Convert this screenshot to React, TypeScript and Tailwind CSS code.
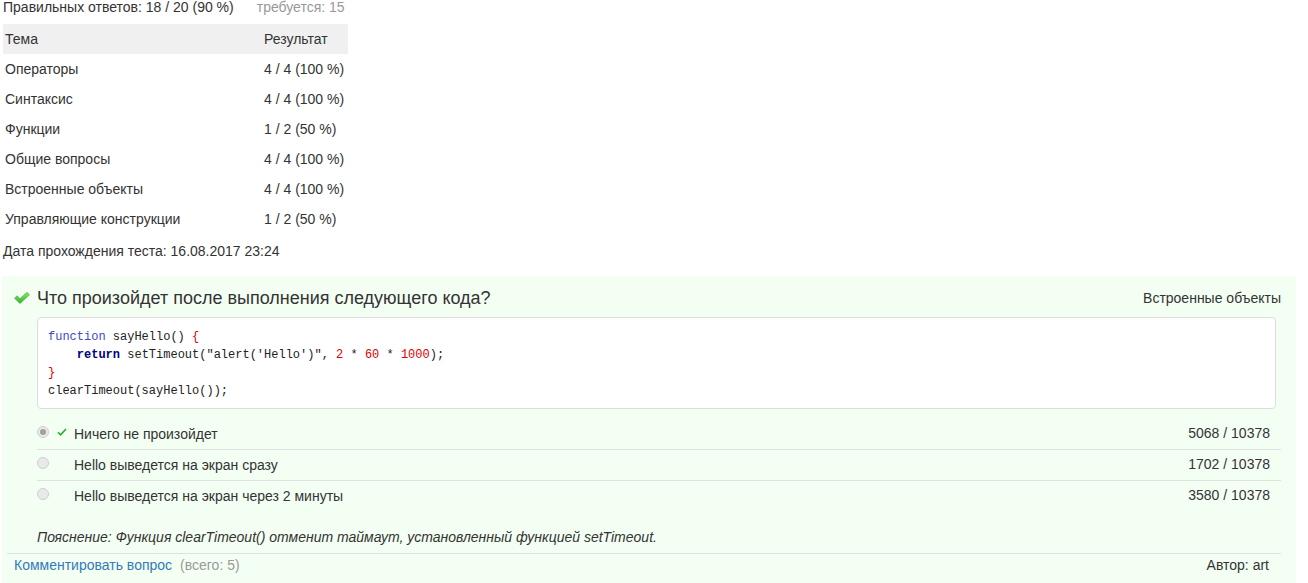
const topics = [
  { name: 'Операторы', result: '4 / 4 (100 %)' },
  { name: 'Синтаксис', result: '4 / 4 (100 %)' },
  { name: 'Функции', result: '1 / 2 (50 %)' },
  { name: 'Общие вопросы', result: '4 / 4 (100 %)' },
  { name: 'Встроенные объекты', result: '4 / 4 (100 %)' },
  { name: 'Управляющие конструкции', result: '1 / 2 (50 %)' },
];

const answers = [
  { text: 'Ничего не произойдет', count: '5068 / 10378', checked: true },
  { text: 'Hello выведется на экран сразу', count: '1702 / 10378', checked: false },
  { text: 'Hello выведется на экран через 2 минуты', count: '3580 / 10378', checked: false },
];

const BigCheck = () => (
  <svg width="16" height="12" viewBox="0 0 16 12" className="shrink-0">
    <defs>
      <linearGradient id="chk" x1="0" y1="0" x2="0" y2="1">
        <stop offset="0" stopColor="#8ee66a" />
        <stop offset="1" stopColor="#2fb52a" />
      </linearGradient>
    </defs>
    <path d="M0.5 6.2 L3 3.8 L6 6.6 L13 0.3 L15.5 2.7 L6 11.5 Z" fill="url(#chk)" stroke="#3aa832" strokeWidth="0.6" strokeLinejoin="round" />
  </svg>
);

const SmallCheck = () => (
  <svg width="10" height="8" viewBox="0 0 10 8" className="shrink-0">
    <path d="M1 4.2 L3.6 6.8 L9 1" fill="none" stroke="#22b022" strokeWidth="1.6" />
  </svg>
);

const Radio = ({ checked }: { checked: boolean }) => (
  <div className="w-[12px] h-[12px] rounded-full border border-[#cfcfcf] bg-[#e9e9e9] flex items-center justify-center shrink-0">
    {checked && <div className="w-[6px] h-[6px] rounded-full bg-[#a0a0a0]" />}
  </div>
);

const App = () => {
  return (
    <div className="min-h-screen bg-white text-[#333] text-[14px]" style={{ fontFamily: '"Liberation Sans", Arial, sans-serif' }}>
      <div className="pl-[3px] leading-[14px] flex">
        <span>Правильных ответов: 18 / 20 (90 %)</span>
        <span className="ml-[23px] text-[#999]">требуется: 15</span>
      </div>

      <table className="ml-[3px] mt-[10px] w-[345px] border-collapse leading-[20px]">
        <thead>
          <tr className="bg-[#f0f0f0]">
            <th className="text-left font-normal py-[5px] pl-[2px] w-[255px]">Тема</th>
            <th className="text-left font-normal py-[5px] pl-[6px]">Результат</th>
          </tr>
        </thead>
        <tbody>
          {topics.map((t) => (
            <tr key={t.name}>
              <td className="py-[5px] pl-[2px]">{t.name}</td>
              <td className="py-[5px] pl-[6px]">{t.result}</td>
            </tr>
          ))}
        </tbody>
      </table>

      <div className="pl-[3px] mt-[7px] leading-[20px]">Дата прохождения теста: 16.08.2017 23:24</div>

      <div className="mt-[15px] ml-[2px] mr-[12px] bg-[#f4fff4] pl-[5px] pr-[15px] pt-[12px] pb-[10px]">
        <div className="flex items-center justify-between pl-[7px]">
          <div className="flex items-center gap-[7px]">
            <BigCheck />
            <span className="text-[18px] leading-[20px]">Что произойдет после выполнения следующего кода?</span>
          </div>
          <span className="leading-[20px]">Встроенные объекты</span>
        </div>

        <div
          className="ml-[30px] mr-[5px] mt-[9px] bg-white border border-[#dddddd] rounded-[4px] px-[10px] pt-[10px] pb-[8px] text-[12px] leading-[18px] text-[#222] whitespace-pre"
          style={{ fontFamily: '"Liberation Mono", "DejaVu Sans Mono", monospace' }}
        >
          <div>
            <span className="text-[#3d49cc]">function</span> sayHello() <span className="text-[#e00000]">{'{'}</span>
          </div>
          <div>
            {'    '}
            <span className="font-bold text-[#000080]">return</span> setTimeout("alert('Hello')", <span className="text-[#e00000]">2</span> * <span className="text-[#e00000]">60</span> * <span className="text-[#e00000]">1000</span>);
          </div>
          <div className="text-[#e00000]">{'}'}</div>
          <div>clearTimeout(sayHello());</div>
        </div>

        <div className="ml-[30px] mt-[10px]">
          {answers.map((a, i) => (
            <div
              key={a.text}
              className={`flex items-center leading-[20px] ${i < answers.length - 1 ? 'h-[31px] border-b border-[#e0e0e0]' : 'h-[30px]'}`}
            >
              <div className="w-[37px] flex items-center gap-[8px] -mt-[4px]">
                <Radio checked={a.checked} />
                {a.checked && <SmallCheck />}
              </div>
              <span className="flex-1">{a.text}</span>
              <span className="pr-[11px] -mt-[3px]">{a.count}</span>
            </div>
          ))}
        </div>

        <div className="ml-[30px] mt-[16px] italic leading-[20px]">
          Пояснение: Функция clearTimeout() отменит таймаут, установленный функцией setTimeout.
        </div>

        <div className="mt-[6px] border-t border-[#e0e0e0] pt-[1px] flex justify-between leading-[20px]">
          <div className="pl-[7px]">
            <span className="text-[#337ab7]">Комментировать вопрос</span>
            <span className="ml-[8px] text-[#999]">(всего: 5)</span>
          </div>
          <span className="pr-[12px]">Автор: art</span>
        </div>
      </div>
    </div>
  );
};

export default App;
